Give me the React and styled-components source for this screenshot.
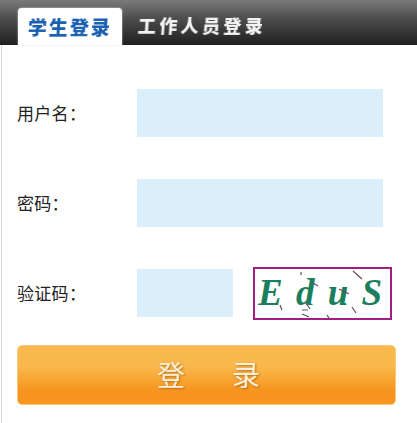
import React from "react";
import styled, { createGlobalStyle } from "styled-components";

const GlobalStyle = createGlobalStyle`
  html, body {
    margin: 0;
    padding: 0;
    background: #fff;
    overflow: hidden;
  }
`;

const Page = styled.div`
  width: 417px;
  height: 423px;
  overflow: hidden;
  font-family: "Noto Sans CJK SC", "Liberation Sans", sans-serif;
`;

const TabBar = styled.div`
  display: flex;
  align-items: flex-end;
  height: 45px;
  padding-left: 18px;
  background: linear-gradient(to bottom, #7a7a7a 0%, #4e4e4e 40%, #1f1f1f 100%);
`;

const Tab = styled.div`
  display: flex;
  align-items: center;
  justify-content: center;
  height: ${props => (props.$active ? "37px" : "45px")};
  width: ${props => (props.$active ? "104px" : "160px")};
  background: ${props => (props.$active ? "#fff" : "transparent")};
  border-radius: 4px 4px 0 0;
  box-shadow: ${props => (props.$active ? "0 0 2px #ddd" : "none")};
  color: ${props => (props.$active ? "#1a5fb0" : "#f2f2f2")};
  font-family: "Noto Sans CJK SC", sans-serif;
  font-weight: 900;
  font-size: ${props => (props.$active ? "19px" : "18px")};
  letter-spacing: ${props => (props.$active ? "2px" : "3.4px")};
  white-space: nowrap;
  transform: translateY(${props => (props.$active ? "0" : "2px")});

  span {
    display: block;
    filter: blur(0.6px);
    transform: skewX(-4deg);
  }
`;

const Form = styled.form`
  height: 378px;
  box-sizing: border-box;
  margin-left: 1px;
  border-left: 1px solid #d8d8d8;
  padding: 44px 0 0 15px;
  display: flex;
  flex-direction: column;
`;

const Row = styled.div`
  display: flex;
  align-items: center;
  height: 48px;
  margin-bottom: 42px;
`;

const Label = styled.label`
  width: 120px;
  flex: none;
  padding-bottom: 2px;
  font-size: 17px;
  letter-spacing: 0.3px;
  color: #222;
`;

const Input = styled.input`
  display: block;
  box-sizing: border-box;
  border: none;
  outline: none;
  padding: 0 8px;
  height: 48px;
  width: ${props => props.$w || "246px"};
  background: #dbeffb;
`;

const Captcha = styled.div`
  position: relative;
  flex: none;
  box-sizing: border-box;
  width: 139px;
  height: 53px;
  margin-left: 20px;
  border: 2px solid #a21f80;
  background: #fff;
  display: flex;
  align-items: center;
  justify-content: space-between;
  padding: 0 8px 2px 3px;
  font-family: "Liberation Serif", serif;
  font-style: italic;
  font-weight: 700;
  font-size: 37px;
  line-height: 1;
  color: #1b7f5e;
`;

const Noise = styled.svg`
  position: absolute;
  inset: 0;
  width: 100%;
  height: 100%;
`;

const Submit = styled.button`
  display: flex;
  align-items: center;
  justify-content: center;
  gap: 47px;
  box-sizing: border-box;
  width: 379px;
  height: 60px;
  margin-top: -14px;
  padding: 0 0 2px 4px;
  border: 1px solid #f9c878;
  border-radius: 5px;
  background: linear-gradient(to bottom, #f9b94d 0%, #f9b84c 35%, #f7941e 78%, #f8951f 100%);
  color: #fbeeda;
  font-family: "Noto Sans CJK SC", sans-serif;
  font-size: 28px;
  text-shadow: 1px 1px 2px rgba(120, 70, 0, 0.55);
`;

const App = () => {
  return (
    <Page>
      <GlobalStyle />
      <TabBar>
        <Tab $active><span>学生登录</span></Tab>
        <Tab><span>工作人员登录</span></Tab>
      </TabBar>
      <Form onSubmit={e => e.preventDefault()}>
        <Row>
          <Label>用户名：</Label>
          <Input type="text" />
        </Row>
        <Row>
          <Label>密码：</Label>
          <Input type="password" />
        </Row>
        <Row>
          <Label>验证码：</Label>
          <Input type="text" $w="96px" />
          <Captcha>
            <span>E</span>
            <span>d</span>
            <span>u</span>
            <span>S</span>
            <Noise viewBox="0 0 135 49">
              <g fill="none" strokeWidth="1.2">
                <path d="M98 2l9 8M84 20l10 5M58 14l5 3M50 33l5 7M25 36l2 5M97 38l4 6" stroke="#6e4a5e" />
                <path d="M47 41h6M47 45l7 3M72 46l2 3M46 3v3" stroke="#4e5a60" />
              </g>
            </Noise>
          </Captcha>
        </Row>
        <Submit type="submit">
          <span>登</span>
          <span>录</span>
        </Submit>
      </Form>
    </Page>
  );
};

export default App;
